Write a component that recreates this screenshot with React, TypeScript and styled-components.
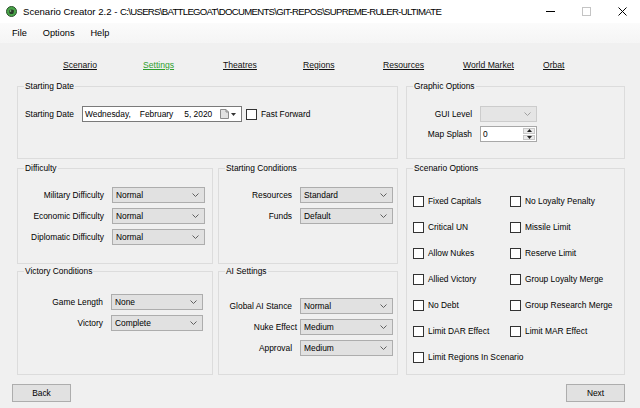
import React from "react";
import styled, { createGlobalStyle } from "styled-components";

const Global = createGlobalStyle`
  html, body { margin: 0; padding: 0; background: #f0f0f0; }
  *, *::before, *::after { box-sizing: border-box; }
`;

const FONT = `"Liberation Sans", Arial, sans-serif`;

const Window = styled.div`
  width: 640px;
  height: 408px;
  display: flex;
  flex-direction: column;
  background: #f0f0f0;
  font-family: ${FONT};
  font-size: 8.4px;
  color: #000;
  overflow: hidden;
`;

const TitleBar = styled.div`
  height: 23px;
  flex: none;
  background: #fff;
  display: flex;
  align-items: center;
  padding-left: 6px;
`;

const AppIcon = styled.svg`
  width: 11px;
  height: 11px;
  flex: none;
`;

const TitleText = styled.div`
  flex: 1;
  margin-left: 6px;
  font-size: 9.6px;
  white-space: nowrap;
  overflow: hidden;
`;

const TitlePath = styled.span`
  letter-spacing: -0.7px;
`;

const WinButtons = styled.div`
  display: flex;
  height: 100%;
`;

const WinButton = styled.div`
  width: 36px;
  height: 100%;
  display: flex;
  align-items: center;
  justify-content: center;
`;

const MenuBar = styled.div`
  height: 20px;
  flex: none;
  background: linear-gradient(#fbfbfb, #f5f5f5);
  display: flex;
  align-items: center;
  gap: 16px;
  padding-left: 12px;
  font-size: 9.2px;
`;

const MenuItem = styled.span``;

const TabRow = styled.div`
  height: 43px;
  flex: none;
  display: grid;
  grid-template-columns: repeat(7, 80px);
  align-items: center;
  padding-left: 63px;
`;

const TabLink = styled.span<{ $active?: boolean }>`
  justify-self: start;
  text-decoration: underline;
  color: ${(p) => (p.$active ? "#2e9e2e" : "#111")};
  font-size: 8.6px;
  cursor: pointer;
`;

const Main = styled.div`
  display: flex;
  gap: 8px;
  height: 289px;
  flex: none;
  padding-left: 17px;
`;

const LeftColumn = styled.div`
  width: 381px;
  display: flex;
  flex-direction: column;
`;

const RightColumn = styled.div`
  width: 219px;
  display: flex;
  flex-direction: column;
  gap: 9px;
`;

const PairRow = styled.div<{ $h: number; $mt: number }>`
  display: flex;
  gap: 5px;
  height: ${(p) => p.$h}px;
  margin-top: ${(p) => p.$mt}px;
`;

const Group = styled.div<{ $w?: number; $h?: number; $grow?: boolean }>`
  position: relative;
  border: 1px solid #dcdcdc;
  ${(p) => (p.$w ? `width: ${p.$w}px;` : "")}
  ${(p) => (p.$h ? `height: ${p.$h}px; flex: none;` : "")}
  ${(p) => (p.$grow ? "flex: 1;" : "")}
`;

const Caption = styled.span`
  position: absolute;
  top: -6px;
  left: 6px;
  padding: 0 1px;
  line-height: 11px;
  background: #f0f0f0;
  white-space: nowrap;
`;

const DateRow = styled.div`
  display: flex;
  align-items: center;
  padding: 19px 0 0 7px;
`;

const RowLabel = styled.span`
  width: 57px;
  white-space: nowrap;
`;

const DatePicker = styled.div`
  width: 160px;
  height: 16px;
  border: 1px solid #7a7a7a;
  background: #fff;
  display: flex;
  align-items: center;
  padding: 0 5px 0 2px;
`;

const DatePart = styled.span<{ $ml?: number }>`
  margin-left: ${(p) => p.$ml ?? 0}px;
  white-space: nowrap;
`;

const DateButtons = styled.div`
  margin-left: auto;
  display: flex;
  align-items: center;
  gap: 2px;
`;

const CheckItem = styled.label<{ $ml?: number }>`
  display: flex;
  align-items: center;
  gap: 4px;
  margin-left: ${(p) => p.$ml ?? 0}px;
  white-space: nowrap;
`;

const Box = styled.span`
  width: 11px;
  height: 11px;
  flex: none;
  border: 1px solid #333;
  background: #fff;
`;

const FieldGrid = styled.div<{ $label: number; $field: number; $top: number; $gap?: number }>`
  display: grid;
  grid-template-columns: ${(p) => p.$label}px ${(p) => p.$field}px;
  column-gap: 8px;
  row-gap: ${(p) => p.$gap ?? 5}px;
  padding-top: ${(p) => p.$top}px;
  align-items: center;
`;

const FieldLabel = styled.span<{ $nudge?: number }>`
  text-align: right;
  white-space: nowrap;
  margin-right: ${(p) => -(p.$nudge ?? 0)}px;
`;

const ComboBox = styled.div<{ $disabled?: boolean }>`
  height: 16px;
  border: 1px solid ${(p) => (p.$disabled ? "#cccccc" : "#adadad")};
  background: ${(p) => (p.$disabled ? "#e5e5e5" : "#e1e1e1")};
  display: flex;
  align-items: center;
  justify-content: space-between;
  padding: 0 5px 0 3px;
`;

const Chevron = styled.svg`
  width: 7px;
  height: 4px;
  flex: none;
`;

const NumericBox = styled.div`
  height: 16px;
  border: 1px solid #a8a8a8;
  background: #fff;
  display: flex;
  align-items: center;
  padding: 0 1px 0 2px;
`;

const NumericValue = styled.span`
  flex: 1;
`;

const SpinButtons = styled.div`
  width: 12px;
  height: 12px;
  display: flex;
  flex-direction: column;
  gap: 1px;
`;

const SpinButton = styled.div`
  flex: 1;
  background: #eaeaea;
  border: 1px solid #c8c8c8;
  display: flex;
  align-items: center;
  justify-content: center;
`;

const OptionGrid = styled.div`
  display: grid;
  grid-template-columns: 97px 1fr;
  grid-auto-rows: 26px;
  align-items: center;
  padding: 19px 0 0 6px;
`;

const Footer = styled.div`
  display: flex;
  justify-content: space-between;
  padding: 9px 15px 0 12px;
`;

const PushButton = styled.button`
  width: 59px;
  height: 18px;
  border: 1px solid #adadad;
  background: #e1e1e1;
  font-family: ${FONT};
  font-size: 8.4px;
  color: #000;
  padding: 0;
`;

const Combo = ({ value, disabled }: { value?: string; disabled?: boolean }) => (
  <ComboBox $disabled={disabled}>
    <span>{value ?? ""}</span>
    <Chevron viewBox="0 0 7 4">
      <path d="M0.5 0.5 L3.5 3.5 L6.5 0.5" fill="none" stroke={disabled ? "#a0a0a0" : "#606060"} strokeWidth="1" />
    </Chevron>
  </ComboBox>
);

const Check = ({ label, ml }: { label: string; ml?: number }) => (
  <CheckItem $ml={ml}>
    <Box />
    <span>{label}</span>
  </CheckItem>
);

const options = [
  "Fixed Capitals",
  "No Loyalty Penalty",
  "Critical UN",
  "Missile Limit",
  "Allow Nukes",
  "Reserve Limit",
  "Allied Victory",
  "Group Loyalty Merge",
  "No Debt",
  "Group Research Merge",
  "Limit DAR Effect",
  "Limit MAR Effect",
  "Limit Regions In Scenario",
];

const tabs = ["Scenario", "Settings", "Theatres", "Regions", "Resources", "World Market", "Orbat"];

export default function App() {
  return (
    <>
      <Global />
      <Window>
        <TitleBar>
          <AppIcon viewBox="0 0 11 11">
            <circle cx="5.5" cy="5.5" r="5" fill="#4aa64a" stroke="#2c4f2c" strokeWidth="1" />
            <path d="M3 4.5 Q5.5 2.5 8 4.5 L7.5 7.5 Q5.5 8.5 3.5 7.5 Z" fill="#2a3d2a" />
            <circle cx="4.5" cy="5" r="0.8" fill="#9fd59f" />
          </AppIcon>
          <TitleText>
            Scenario Creator 2.2 - <TitlePath>C:\USERS\BATTLEGOAT\DOCUMENTS\GIT-REPOS\SUPREME-RULER-ULTIMATE</TitlePath>
          </TitleText>
          <WinButtons>
            <WinButton>
              <svg width="9" height="9" viewBox="0 0 9 9">
                <line x1="0" y1="4.5" x2="9" y2="4.5" stroke="#000" strokeWidth="1" />
              </svg>
            </WinButton>
            <WinButton>
              <svg width="9" height="9" viewBox="0 0 9 9">
                <rect x="0.5" y="0.5" width="8" height="8" fill="none" stroke="#c4c4c4" strokeWidth="1" />
              </svg>
            </WinButton>
            <WinButton>
              <svg width="9" height="9" viewBox="0 0 9 9">
                <path d="M0.5 0.5 L8.5 8.5 M8.5 0.5 L0.5 8.5" stroke="#000" strokeWidth="1" />
              </svg>
            </WinButton>
          </WinButtons>
        </TitleBar>

        <MenuBar>
          <MenuItem>File</MenuItem>
          <MenuItem>Options</MenuItem>
          <MenuItem>Help</MenuItem>
        </MenuBar>

        <TabRow>
          {tabs.map((t) => (
            <TabLink key={t} $active={t === "Settings"}>
              {t}
            </TabLink>
          ))}
        </TabRow>

        <Main>
          <LeftColumn>
            <Group $h={73}>
              <Caption>Starting Date</Caption>
              <DateRow>
                <RowLabel>Starting Date</RowLabel>
                <DatePicker>
                  <DatePart>Wednesday,</DatePart>
                  <DatePart $ml={9}>February</DatePart>
                  <DatePart $ml={11}>5, 2020</DatePart>
                  <DateButtons>
                    <svg width="9" height="10" viewBox="0 0 9 10">
                      <path d="M0.5 0.5 H6 L8.5 3 V9.5 H0.5 Z" fill="#e2e2e2" stroke="#8c8c8c" strokeWidth="1" />
                      <path d="M6 0.5 V3 H8.5" fill="none" stroke="#8c8c8c" strokeWidth="1" />
                    </svg>
                    <svg width="5" height="3" viewBox="0 0 5 3">
                      <path d="M0 0 H5 L2.5 3 Z" fill="#333" />
                    </svg>
                  </DateButtons>
                </DatePicker>
                <Check label="Fast Forward" ml={4} />
              </DateRow>
            </Group>

            <PairRow $h={96} $mt={9}>
              <Group $w={196}>
                <Caption>Difficulty</Caption>
                <FieldGrid $label={86} $field={93} $top={18}>
                  <FieldLabel>Military Difficulty</FieldLabel>
                  <Combo value="Normal" />
                  <FieldLabel>Economic Difficulty</FieldLabel>
                  <Combo value="Normal" />
                  <FieldLabel>Diplomatic Difficulty</FieldLabel>
                  <Combo value="Normal" />
                </FieldGrid>
              </Group>
              <Group $w={180}>
                <Caption>Starting Conditions</Caption>
                <FieldGrid $label={73} $field={93} $top={18}>
                  <FieldLabel>Resources</FieldLabel>
                  <Combo value="Standard" />
                  <FieldLabel>Funds</FieldLabel>
                  <Combo value="Default" />
                </FieldGrid>
              </Group>
            </PairRow>

            <PairRow $h={104} $mt={7}>
              <Group $w={196}>
                <Caption>Victory Conditions</Caption>
                <FieldGrid $label={85} $field={92} $top={22}>
                  <FieldLabel>Game Length</FieldLabel>
                  <Combo value="None" />
                  <FieldLabel>Victory</FieldLabel>
                  <Combo value="Complete" />
                </FieldGrid>
              </Group>
              <Group $w={180}>
                <Caption>AI Settings</Caption>
                <FieldGrid $label={73} $field={93} $top={26}>
                  <FieldLabel>Global AI Stance</FieldLabel>
                  <Combo value="Normal" />
                  <FieldLabel $nudge={5}>Nuke Effect</FieldLabel>
                  <Combo value="Medium" />
                  <FieldLabel>Approval</FieldLabel>
                  <Combo value="Medium" />
                </FieldGrid>
              </Group>
            </PairRow>
          </LeftColumn>

          <RightColumn>
            <Group $h={73}>
              <Caption>Graphic Options</Caption>
              <FieldGrid $label={65} $field={57} $top={19} $gap={4}>
                <FieldLabel>GUI Level</FieldLabel>
                <Combo disabled />
                <FieldLabel>Map Splash</FieldLabel>
                <NumericBox>
                  <NumericValue>0</NumericValue>
                  <SpinButtons>
                    <SpinButton>
                      <svg width="5" height="3" viewBox="0 0 5 3">
                        <path d="M0 3 H5 L2.5 0 Z" fill="#222" />
                      </svg>
                    </SpinButton>
                    <SpinButton>
                      <svg width="5" height="3" viewBox="0 0 5 3">
                        <path d="M0 0 H5 L2.5 3 Z" fill="#222" />
                      </svg>
                    </SpinButton>
                  </SpinButtons>
                </NumericBox>
              </FieldGrid>
            </Group>
            <Group $grow>
              <Caption>Scenario Options</Caption>
              <OptionGrid>
                {options.map((o) => (
                  <Check key={o} label={o} />
                ))}
              </OptionGrid>
            </Group>
          </RightColumn>
        </Main>

        <Footer>
          <PushButton>Back</PushButton>
          <PushButton>Next</PushButton>
        </Footer>
      </Window>
    </>
  );
}
